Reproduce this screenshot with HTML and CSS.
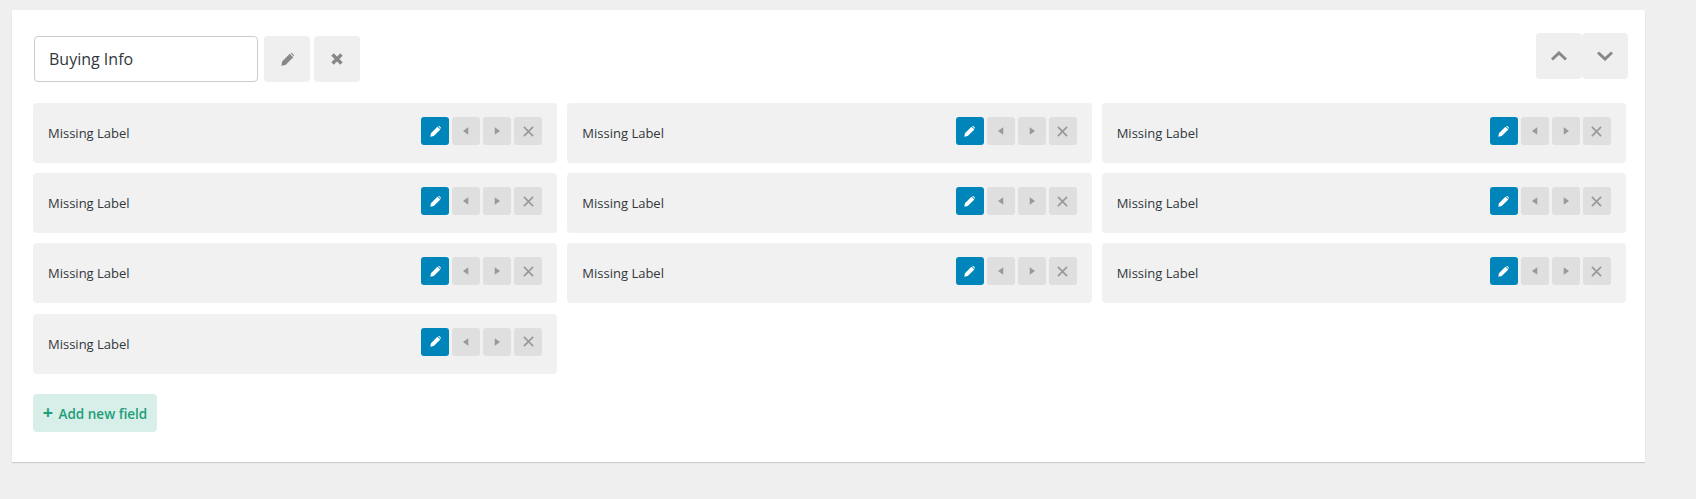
FILE: index.html
```html
<!DOCTYPE html>
<html lang="en">
<head>
  <meta charset="UTF-8" />
  <title>Buying Info</title>
  <link rel="stylesheet" href="styles.css">
</head>
<body>
  <svg class="sprites" width="0" height="0">
    <symbol id="i-pencil" viewBox="0 0 14 14"><path d="M9.400.8 13.200 4.600 4.800 12.800 .4 13.600 1.200 9.200ZM10.400.2C11-.2 11.600-.2 12.200.3L13.700 1.800C14.200 2.400 14.200 3 13.800 3.600Z"/></symbol>
    <symbol id="i-left" viewBox="0 0 8 10"><path d="M7 0V10L0 5Z"/></symbol>
    <symbol id="i-right" viewBox="0 0 8 10"><path d="M1 0V10L8 5Z"/></symbol>
    <symbol id="i-x" viewBox="0 0 12 12"><path d="M1 1 11 11M11 1 1 11" fill="none" stroke="currentColor" stroke-width="1.800"/></symbol>
    <symbol id="i-x-bold" viewBox="0 0 12 12"><path d="M1.500 1.500 10.500 10.500M10.500 1.500 1.500 10.500" fill="none" stroke="currentColor" stroke-width="3.400"/></symbol>
    <symbol id="i-up" viewBox="0 0 16 10"><path d="M1 8.500 8 2 15 8.500" fill="none" stroke="currentColor" stroke-width="3"/></symbol>
    <symbol id="i-down" viewBox="0 0 16 10"><path d="M1 1.500 8 8 15 1.500" fill="none" stroke="currentColor" stroke-width="3"/></symbol>
  </svg>

  <div class="panel">
    <div class="panel-head">
      <div class="title-group">
        <input class="title-input" type="text" value="Buying Info">
        <button class="head-btn"><svg class="ic-pencil"><use href="#i-pencil"/></svg></button>
        <button class="head-btn"><svg class="ic-x-bold"><use href="#i-x-bold"/></svg></button>
      </div>
      <div class="order-group">
        <button class="head-btn"><svg class="ic-chevron"><use href="#i-up"/></svg></button>
        <button class="head-btn"><svg class="ic-chevron"><use href="#i-down"/></svg></button>
      </div>
    </div>

    <div class="fields" id="fields"></div>

    <button class="add-field"><span class="plus">+</span> Add new field</button>
  </div>

  <script>
    const row = `
      <div class="field">
        <span class="field-label">Missing Label</span>
        <div class="field-actions">
          <button class="act edit"><svg class="ic-small"><use href="#i-pencil"/></svg></button>
          <button class="act"><svg class="ic-arrow"><use href="#i-left"/></svg></button>
          <button class="act"><svg class="ic-arrow"><use href="#i-right"/></svg></button>
          <button class="act"><svg class="ic-x"><use href="#i-x"/></svg></button>
        </div>
      </div>
    `;
    document.getElementById("fields").innerHTML = row.repeat(10);
  </script>
</body>
</html>
```

FILE: styles.css
```css
body {
  margin: 0;
  padding: 10px 51px 30px 12px;
  font-family: "Open Sans", sans-serif;
  background: #efefef;
  color: #32373c;
}

button {
  font-family: inherit;
  border: none;
  padding: 0;
  cursor: pointer;
}

.sprites {
  position: absolute;
}

.panel {
  background: #fff;
  padding: 23px 20px 30px 21px;
  box-shadow: 0 1px 1px rgba(0, 0, 0, 0.15);
}

.panel-head {
  display: flex;
  justify-content: space-between;
  align-items: flex-start;
  margin-bottom: 21px;
}

.title-group {
  display: flex;
  gap: 4px;
  margin-top: 3px;
  margin-left: 1px;
}

.title-input {
  width: 224px;
  height: 46px;
  box-sizing: border-box;
  margin-right: 2px;
  padding: 0 14px;
  border: 1px solid #ccc;
  border-radius: 4px;
  font-family: inherit;
  font-size: 16px;
  color: #32373c;
}

.order-group {
  display: flex;
  margin-right: -3px;
}

.head-btn {
  width: 46px;
  height: 46px;
  display: flex;
  align-items: center;
  justify-content: center;
  background: #efefef;
  border-radius: 4px;
  color: #888;
}

.ic-pencil {
  width: 13px;
  height: 13px;
  fill: #888;
}

.ic-x-bold {
  width: 12px;
  height: 12px;
}

.ic-chevron {
  width: 16px;
  height: 10px;
}

.fields {
  display: grid;
  grid-template-columns: repeat(3, 524.33px);
  column-gap: 10px;
  row-gap: 10.24px;
}

.field {
  height: 60px;
  box-sizing: border-box;
  display: flex;
  align-items: center;
  justify-content: space-between;
  padding: 0 15px;
  background: #f1f1f1;
  border-radius: 4px;
}

.field-label {
  font-size: 13px;
  font-weight: 500;
  color: #32373c;
}

.field-actions {
  display: flex;
  gap: 3px;
  margin-bottom: 4px;
}

.act {
  width: 28px;
  height: 28px;
  display: flex;
  align-items: center;
  justify-content: center;
  background: #dfdfdf;
  border-radius: 3px;
  color: #999;
}

.act.edit {
  background: #0085ba;
}

.ic-small {
  width: 11px;
  height: 11px;
  fill: #fff;
}

.ic-arrow {
  width: 6px;
  height: 8px;
  fill: #999;
}

.ic-x {
  width: 11px;
  height: 11px;
}

.add-field {
  display: block;
  width: 124px;
  height: 38px;
  margin-top: 20px;
  background: #d7efe8;
  border-radius: 4px;
  color: #1e9e78;
  font-size: 13.5px;
  font-weight: 600;
}

.plus {
  font-size: 18px;
  font-weight: 700;
  line-height: 1;
  margin-right: 2px;
}
```
